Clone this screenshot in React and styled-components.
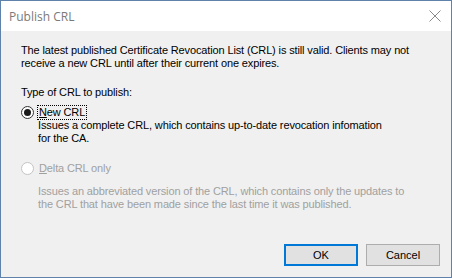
import React from 'react';
import styled, { createGlobalStyle } from 'styled-components';

const Global = createGlobalStyle`
  html, body { margin: 0; padding: 0; background: #fff; }
  * { box-sizing: border-box; }
`;

const Window = styled.div`
  width: 452px;
  height: 278px;
  border: 1px solid #5f82aa;
  display: flex;
  flex-direction: column;
  background: #f0f0f0;
  font-family: "Liberation Sans", Arial, sans-serif;
  font-size: 11px;
  letter-spacing: -0.13px;
  color: #000;
`;

const TitleBar = styled.div`
  height: 30px;
  background: #fff;
  display: flex;
  align-items: center;
  justify-content: space-between;
  padding: 0 8px 0 8px;
  flex-shrink: 0;
  letter-spacing: 0;
`;

const Title = styled.div`
  font-family: "Open Sans", "Noto Sans", sans-serif;
  font-size: 12px;
  color: #7a7a7a;
`;

const Close = styled.div`
  width: 14px;
  height: 14px;
  display: flex;
  margin-right: 1px;
`;

const Body = styled.div`
  flex: 1;
  display: flex;
  flex-direction: column;
  padding: 13px 20px 11px 20px;
`;

const Para = styled.p`
  margin: 0;
  line-height: 13px;
  color: ${p => (p.disabled ? '#a0a0a0' : '#000')};
`;

const Label = styled(Para)`
  margin-top: 16px;
`;

const Option = styled.div`
  display: flex;
  align-items: center;
  gap: 4px;
  margin-top: ${p => p.gap}px;
  height: 14px;
  color: ${p => (p.disabled ? '#a0a0a0' : '#000')};
`;

const Radio = styled.span`
  width: 13px;
  height: 13px;
  border-radius: 50%;
  border: 1px solid ${p => (p.disabled ? '#c4c4c4' : '#333')};
  background: #fff;
  display: flex;
  align-items: center;
  justify-content: center;
  &::after {
    content: '';
    width: 7px;
    height: 7px;
    border-radius: 50%;
    background: #1a1a1a;
    display: ${p => (p.checked ? 'block' : 'none')};
  }
`;

const OptionText = styled.span`
  padding: 0 1px;
  outline: ${p => (p.focused ? '1px dotted #000' : 'none')};
  line-height: 13px;
  u { text-decoration: underline; }
`;

const Desc = styled(Para)`
  margin-left: 17px;
  margin-top: ${p => p.gap}px;
`;

const Buttons = styled.div`
  margin-top: auto;
  display: flex;
  justify-content: flex-end;
  gap: 8px;
  margin-right: -9px;
`;

const Button = styled.button`
  width: 74px;
  height: 22px;
  font-family: "Liberation Sans", Arial, sans-serif;
  font-size: 11px;
  background: #e1e1e1;
  border: 1px solid ${p => (p.primary ? '#0078d7' : '#adadad')};
  box-shadow: ${p => (p.primary ? 'inset 0 0 0 1px #0078d7' : 'none')};
  color: #000;
  padding: 0;
`;

export default function App() {
  return (
    <>
      <Global />
      <Window>
        <TitleBar>
          <Title>Publish CRL</Title>
          <Close>
            <svg width="14" height="14" viewBox="0 0 14 14">
              <path d="M1.5 1.5 L12.5 12.5 M12.5 1.5 L1.5 12.5" stroke="#8a8a8a" strokeWidth="1" />
            </svg>
          </Close>
        </TitleBar>
        <Body>
          <Para>
            The latest published Certificate Revocation List (CRL) is still valid. Clients may not
            <br />
            receive a new CRL until after their current one expires.
          </Para>
          <Label>Type of CRL to publish:</Label>
          <Option gap={6}>
            <Radio checked />
            <OptionText focused><u>N</u>ew CRL</OptionText>
          </Option>
          <Desc gap={0}>
            Issues a complete CRL, which contains up-to-date revocation infomation
            <br />
            for the CA.
          </Desc>
          <Option gap={16} disabled>
            <Radio disabled />
            <OptionText><u>D</u>elta CRL only</OptionText>
          </Option>
          <Desc disabled gap={10}>
            Issues an abbreviated version of the CRL, which contains only the updates to
            <br />
            the CRL that have been made since the last time it was published.
          </Desc>
          <Buttons>
            <Button primary>OK</Button>
            <Button>Cancel</Button>
          </Buttons>
        </Body>
      </Window>
    </>
  );
}
